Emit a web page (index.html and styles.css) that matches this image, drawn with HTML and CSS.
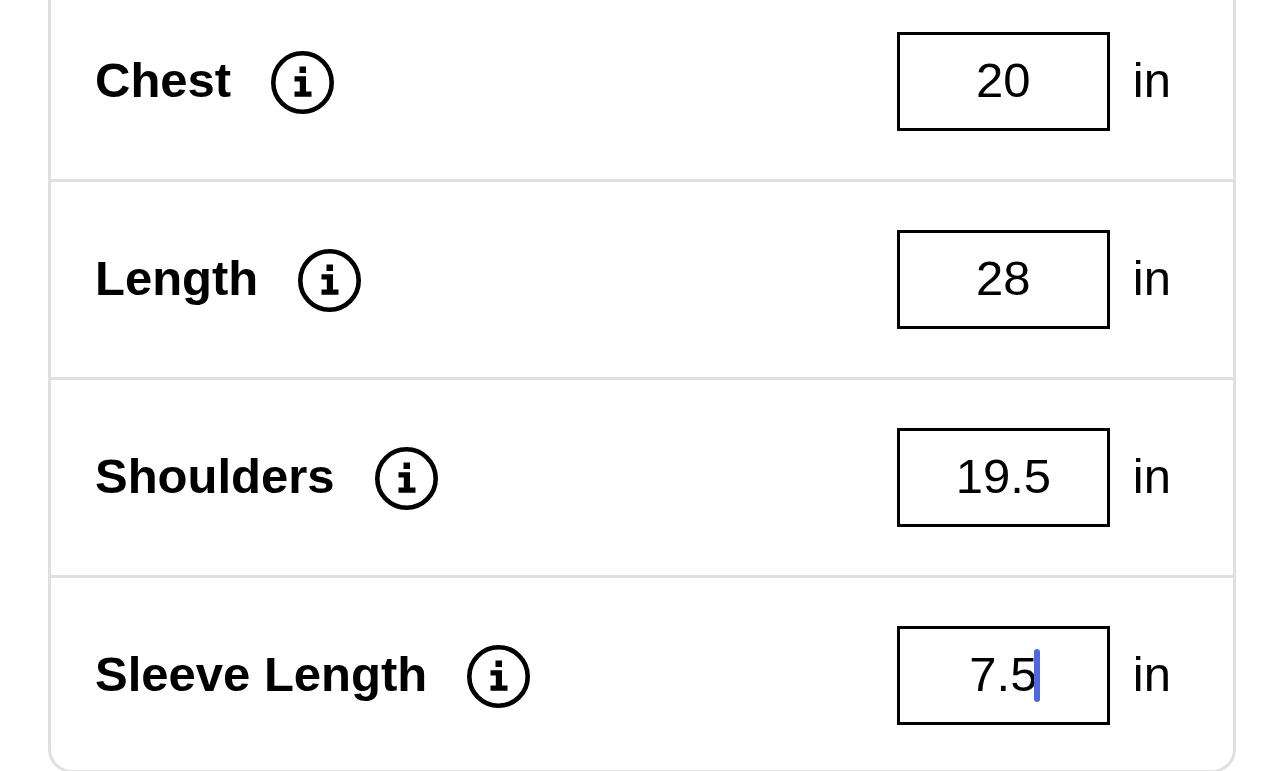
FILE: index.html
```html
<!DOCTYPE html>
<html lang="en">
<head>
  <meta charset="UTF-8" />
  <meta name="viewport" content="width=device-width, initial-scale=1.0" />
  <title>Measurements</title>
  <link rel="stylesheet" href="styles.css">
</head>
<body>
  <!-- Info icon, shared by every row -->
  <svg class="sprite" aria-hidden="true">
    <symbol id="info" viewBox="0 0 63 63">
      <circle cx="31.5" cy="31.5" r="29.2" fill="none" stroke="#000" stroke-width="4.6" />
      <path d="M28.500 15.500h6.500v6.500h-6.500zM23.500 25.300h11.500v15.200H40.500v5.300H23.500v-5.300h5.300v-9.900H23.500z" />
    </symbol>
  </svg>

  <form class="measurements">
    <div class="row">
      <label for="chest">Chest</label>
      <button type="button" class="info" aria-label="About chest"><svg><use href="#info" /></svg></button>
      <div class="field">
        <input type="text" inputmode="decimal" id="chest" value="20">
      </div>
      <span class="unit">in</span>
    </div>

    <div class="row">
      <label for="length">Length</label>
      <button type="button" class="info" aria-label="About length"><svg><use href="#info" /></svg></button>
      <div class="field">
        <input type="text" inputmode="decimal" id="length" value="28">
      </div>
      <span class="unit">in</span>
    </div>

    <div class="row">
      <label for="shoulders">Shoulders</label>
      <button type="button" class="info" aria-label="About shoulders"><svg><use href="#info" /></svg></button>
      <div class="field">
        <input type="text" inputmode="decimal" id="shoulders" value="19.5">
      </div>
      <span class="unit">in</span>
    </div>

    <div class="row">
      <label for="sleeve">Sleeve Length</label>
      <button type="button" class="info" aria-label="About sleeve length"><svg><use href="#info" /></svg></button>
      <div class="field">
        <input type="text" inputmode="decimal" id="sleeve" value="7.5">
        <span class="caret"></span>
      </div>
      <span class="unit">in</span>
    </div>
  </form>
</body>
</html>
```
FILE: styles.css
```css
* {
  box-sizing: border-box;
}

body {
  margin: 0;
  padding: 0 48px;
  background: #fff;
  color: #000;
  font-family: "Liberation Sans", Arial, sans-serif;
  font-size: 49px;
  line-height: 56px;
  overflow: hidden;
}

.sprite {
  display: none;
}

.measurements {
  margin-top: -16px;
  border: 3px solid #e0e0e0;
  border-top: none;
  border-radius: 0 0 24px 24px;
}

.row {
  display: flex;
  align-items: center;
  padding: 48px 62px 48px 44px;
  border-bottom: 3px solid #e0e0e0;
}

.row:last-child {
  padding-bottom: 45px;
  border-bottom: none;
}

.row label,
.unit {
  padding-bottom: 4px;
}

.row label {
  font-weight: bold;
}

.info {
  width: 63px;
  height: 63px;
  margin-top: 2px;
  margin-left: 40px;
  padding: 0;
  border: none;
  background: none;
  cursor: pointer;
}

.info svg {
  display: block;
  width: 63px;
  height: 63px;
}

.field {
  position: relative;
  width: 213px;
  margin-left: auto;
}

.field input {
  display: block;
  width: 100%;
  height: 99px;
  padding: 0 0 4px;
  border: 3px solid #000;
  border-radius: 0;
  background: #fff;
  color: #000;
  font: inherit;
  text-align: center;
  outline: none;
}

/* text cursor of the field being edited */
.caret {
  position: absolute;
  top: 23px;
  left: 137px;
  width: 6px;
  height: 53px;
  border-radius: 3px;
  background: #4f68e0;
}

.unit {
  margin-left: 23px;
}
```
